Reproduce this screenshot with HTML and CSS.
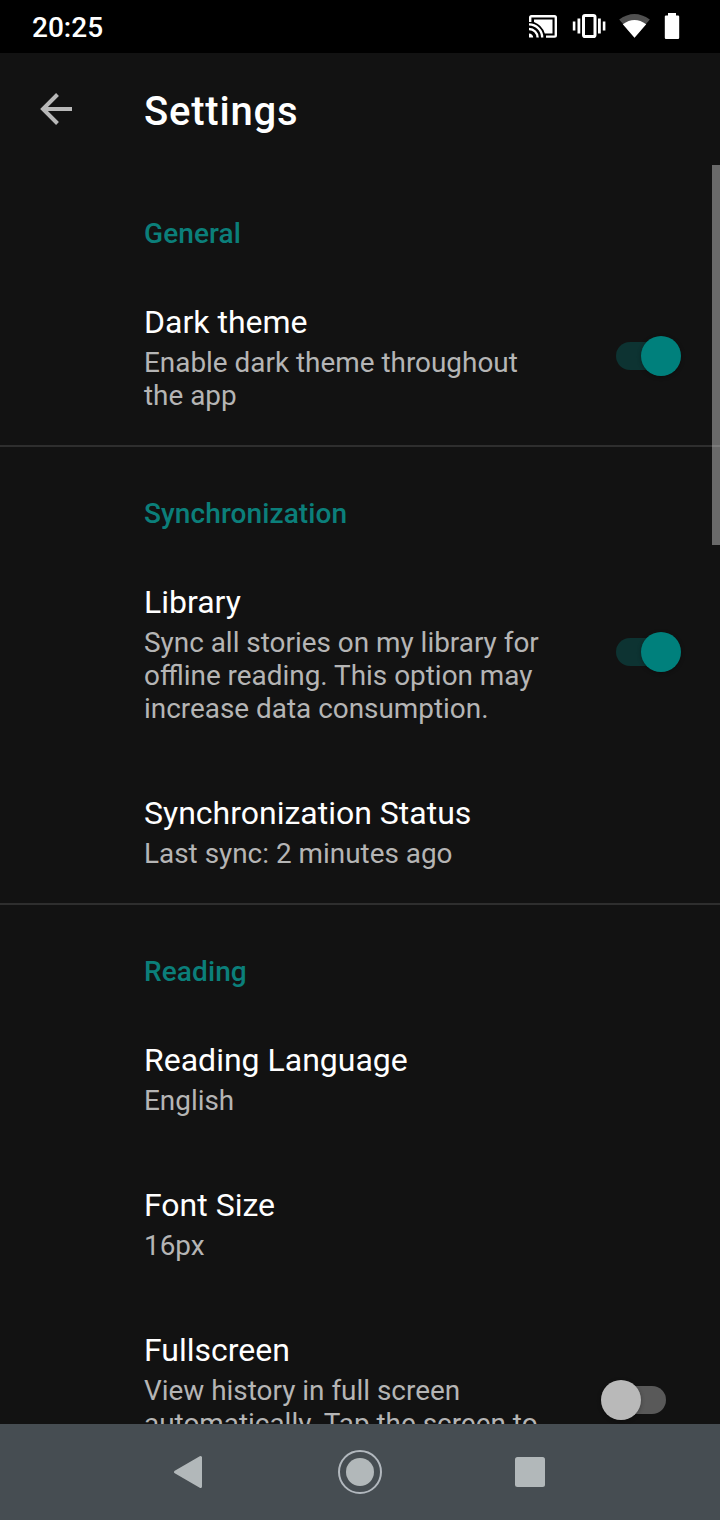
FILE: index.html
```html
<!DOCTYPE html>
<html lang="en">
<head>
    <meta charset="UTF-8">
    <meta name="viewport" content="width=device-width, initial-scale=1.0">
    <title>Settings</title>
    <link rel="stylesheet" href="styles.css">
</head>
<body>

<div class="screen">
    <!-- Status bar -->
    <div class="status">
        <span class="status__time">20:25</span>
        <svg class="status__icons" width="156" height="30" viewBox="528 12 156 30">
            <!-- cast -->
            <g fill="none" stroke="#fff" stroke-width="2.4">
                <path d="M530.2 22v-4.500q0-1.300 1.300-1.300h23q1.300 0 1.300 1.300v17.800q0 1.300-1.300 1.300H546"/>
                <path d="M529 24.400a13.200 13.200 0 0 1 13.200 13.200M529 29a8.600 8.600 0 0 1 8.600 8.600"/>
            </g>
            <path fill="#fff" d="M529 33.400a4.200 4.200 0 0 1 4.200 4.200H529zM534 19.500h18.500v14h-7.700A18 18 0 0 0 534 22z"/>
            <!-- vibrate -->
            <rect x="583.5" y="15.500" width="11.500" height="21" rx="1.600" fill="none" stroke="#fff" stroke-width="3"/>
            <path fill="#fff" d="M577.500 18.500h2.800v15h-2.800zM572.800 21.500h2.600v9h-2.600zM598 18.500h2.800v15H598zM602.800 21.500h2.600v9h-2.600z"/>
            <!-- wifi -->
            <path fill="#505050" d="M619.200 19.500q15.200-11 30.600 0L634.500 37.800z"/>
            <path fill="#fff" d="M622.800 24.200q11.700-8.600 23.400 0L634.500 37.800z"/>
            <!-- battery -->
            <path fill="#fff" d="M668 13h8v2.400h2q1.200 0 1.200 1.200v21.200q0 1.200-1.200 1.200h-12q-1.200 0-1.200-1.200V16.600q0-1.200 1.200-1.200h2z"/>
        </svg>
    </div>

    <!-- App bar -->
    <header class="appbar">
        <svg class="appbar__back" width="32" height="32" viewBox="0 0 32 32">
            <path d="M32 16H3M17.500 1.500L3 16l14.500 14.500" fill="none" stroke="#b8b8b8" stroke-width="4"/>
        </svg>
        <h1 class="appbar__title">Settings</h1>
    </header>

    <!-- Settings list -->
    <main class="list">
        <section class="section">
            <h2 class="section__title">General</h2>
            <div class="item">
                <div class="item__text">
                    <div class="item__title">Dark theme</div>
                    <div class="item__summary">Enable dark theme throughout the app</div>
                </div>
                <div class="switch switch--on"></div>
            </div>
        </section>

        <section class="section">
            <h2 class="section__title">Synchronization</h2>
            <div class="item">
                <div class="item__text">
                    <div class="item__title">Library</div>
                    <div class="item__summary">Sync all stories on my library for offline reading. This option may increase data consumption.</div>
                </div>
                <div class="switch switch--on"></div>
            </div>
            <div class="item">
                <div class="item__text">
                    <div class="item__title">Synchronization Status</div>
                    <div class="item__summary">Last sync: 2 minutes ago</div>
                </div>
            </div>
        </section>

        <section class="section">
            <h2 class="section__title">Reading</h2>
            <div class="item">
                <div class="item__text">
                    <div class="item__title">Reading Language</div>
                    <div class="item__summary">English</div>
                </div>
            </div>
            <div class="item">
                <div class="item__text">
                    <div class="item__title">Font Size</div>
                    <div class="item__summary">16px</div>
                </div>
            </div>
            <div class="item item--tall">
                <div class="item__text">
                    <div class="item__title">Fullscreen</div>
                    <div class="item__summary">View history in full screen automatically. Tap the screen to</div>
                </div>
                <div class="switch"></div>
            </div>
        </section>
        <div class="list__scrollbar"></div>
    </main>

    <!-- Navigation bar -->
    <nav class="navbar">
        <svg width="30" height="34" viewBox="0 0 30 34">
            <path d="M27.500 2.500v29L2.500 17z" fill="#b2b8ba" stroke="#b2b8ba" stroke-width="3" stroke-linejoin="round"/>
        </svg>
        <svg width="44" height="44" viewBox="0 0 44 44">
            <circle cx="22" cy="22" r="21" fill="none" stroke="#b2b8be" stroke-width="2"/>
            <circle cx="22" cy="22" r="14" fill="#b2b8ba"/>
        </svg>
        <svg width="30" height="30" viewBox="0 0 30 30">
            <rect width="30" height="30" rx="2.500" fill="#b2b8ba"/>
        </svg>
    </nav>
</div>

</body>
</html>
```
FILE: styles.css
```css
/* General styles */
* {
    box-sizing: border-box;
}
body {
    font-family: Roboto, sans-serif;
    background: #121212;
    color: #fff;
    margin: 0;
}
svg {
    display: block;
}
.screen {
    display: flex;
    flex-direction: column;
    width: 720px;
    height: 1520px;
    overflow: hidden;
}

/* Status bar */
.status {
    display: flex;
    justify-content: space-between;
    height: 53px;
    padding: 12px 36px 0 32px;
    background: #000;
}
.status__time {
    font-size: 28px;
    font-weight: 500;
    line-height: 31px;
}

/* App bar */
.appbar {
    display: flex;
    align-items: center;
    gap: 72px;
    height: 112px;
    padding: 0 40px;
}
.appbar__title {
    margin: 6px 0 0;
    font-size: 40px;
    font-weight: 500;
    line-height: 48px;
    letter-spacing: 0.8px;
}

/* Settings list */
.list {
    position: relative;
    flex: 1;
    min-height: 0;
    padding-top: 2px;
    overflow: hidden;
}
.list__scrollbar {
    position: absolute;
    top: 0;
    right: 0;
    width: 8px;
    height: 380px;
    background: rgba(255, 255, 255, 0.37);
}
.section + .section {
    border-top: 2px solid #2e2e2e;
}
.section__title {
    margin: 0;
    padding: 50px 0 17px 144px;
    color: #0b7f7a;
    font-size: 28px;
    font-weight: 500;
    line-height: 33px;
    letter-spacing: 0.1px;
}
.item {
    display: flex;
    justify-content: space-between;
    padding: 36px 39px 33px 144px;
}
.item--tall {
    height: 211px;
}
.item__text {
    width: 414px;
}
.item__title {
    margin-bottom: 5px;
    font-size: 32px;
    line-height: 38px;
}
.item__summary {
    color: #b5b5b5;
    font-size: 27.9px;
    line-height: 33px;
}

/* Switch */
.switch {
    position: relative;
    align-self: center;
    width: 80px;
    height: 40px;
    margin-top: -3.4px;
}
.switch::before {
    content: "";
    position: absolute;
    top: 6px;
    left: 15px;
    width: 50px;
    height: 28px;
    border-radius: 14px;
    background: #595959;
}
.switch::after {
    content: "";
    position: absolute;
    top: 0;
    left: 0;
    width: 40px;
    height: 40px;
    border-radius: 50%;
    background: #b9b9b9;
    box-shadow: 0 1px 4px rgba(0, 0, 0, 0.3);
}
.switch--on::before {
    background: #0d3332;
}
.switch--on::after {
    left: 40px;
    background: #00807c;
}

/* Navigation bar */
.navbar {
    display: grid;
    grid-template-columns: 170px 170px 30px;
    justify-content: start;
    align-items: center;
    height: 96px;
    padding-left: 173px;
    background: #464d52;
}
.navbar svg:nth-child(2) {
    margin-left: -5px;
}
.navbar svg:nth-child(3) {
    margin-left: 2px;
}
```
